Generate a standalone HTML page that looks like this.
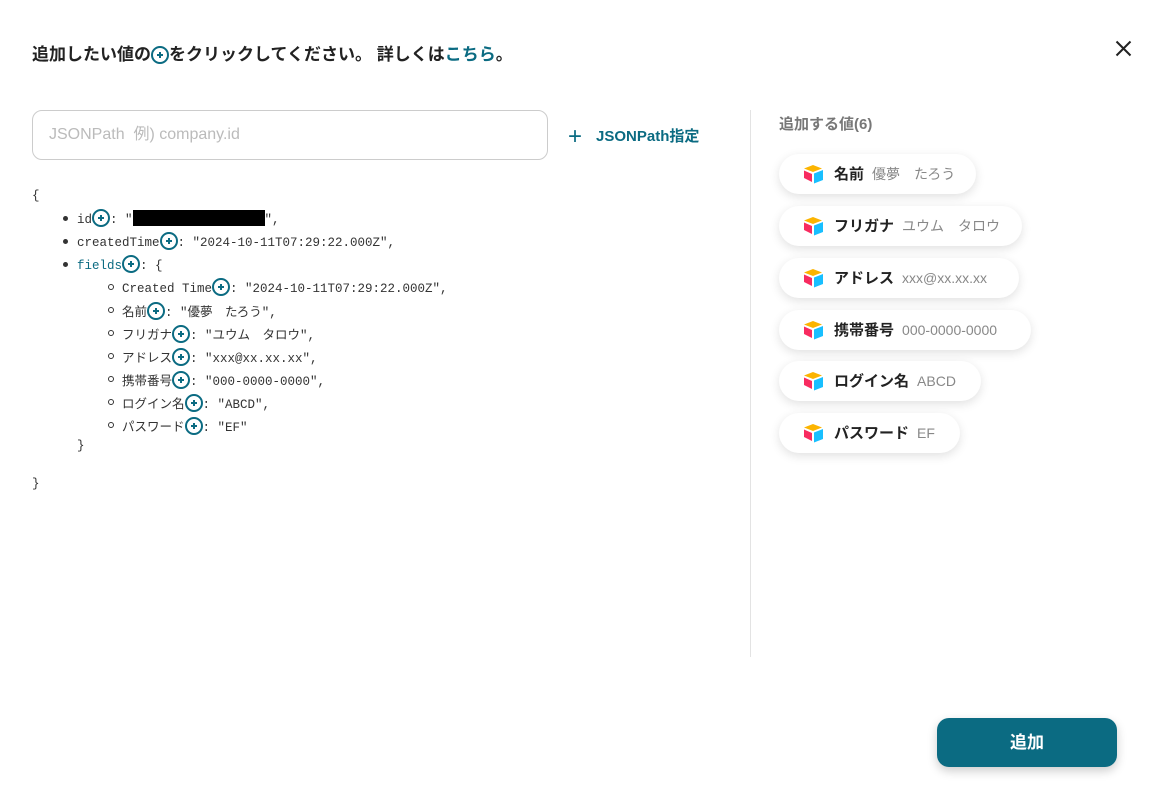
<!DOCTYPE html>
<html><head><meta charset="utf-8"><style>
body{margin:0;width:1157px;height:797px;background:#fff;font-family:"Liberation Sans","Noto Sans CJK JP",sans-serif;position:relative;overflow:hidden;color:#333}
.abs{position:absolute}
.title{left:32px;top:40px;font-size:17px;font-weight:bold;color:#222;white-space:nowrap}
.title a{color:#0b6b82;text-decoration:none}
.pl{display:inline-block;width:18px;height:18px;border:2px solid #0b6b82;border-radius:50%;box-sizing:border-box;vertical-align:-4px;position:relative}
.pl:before{content:"";position:absolute;left:4px;top:6px;width:6px;height:2px;background:#0b6b82}
.pl:after{content:"";position:absolute;left:6px;top:4px;width:2px;height:6px;background:#0b6b82}
.inp{left:32px;top:110px;width:516px;height:50px;border:1px solid #ccc;border-radius:10px;box-sizing:border-box;padding-left:16px;line-height:48px;color:#bbb;font-size:16px}
.jp{left:568px;top:123px;font-size:15px;font-weight:bold;color:#0b6b82}
.code{font-family:"Liberation Mono","Noto Sans CJK JP",monospace;font-size:12.5px;color:#333;white-space:pre}
.line{position:absolute;white-space:pre}
.b1:before{content:"";position:absolute;left:-14px;top:7px;width:5px;height:5px;border-radius:50%;background:#333}
.b2:before{content:"";position:absolute;left:-14px;top:6px;width:4px;height:4px;border-radius:50%;border:1px solid #333}
.div{left:750px;top:110px;width:1px;height:547px;background:#e3e3e3}
.hd{left:779px;top:113px;font-size:15px;font-weight:bold;color:#777}
.chip{position:absolute;left:779px;height:40px;border-radius:20px;background:#fff;box-shadow:0 3px 10px rgba(0,0,0,.12);font-size:15px;line-height:40px;white-space:nowrap}
.chip svg{position:absolute;left:24px;top:10px}
.chip b{position:absolute;left:55px;color:#222}
.chip span{color:#888;font-size:14px;font-weight:normal}
.btn{left:937px;top:718px;width:180px;height:49px;border-radius:12px;background:#0b6b82;color:#fff;font-weight:bold;font-size:17px;text-align:center;line-height:49px;box-shadow:0 4px 10px rgba(0,0,0,.2)}
</style></head><body>
<div class="abs title">追加したい値の<span class="pl"></span>をクリックしてください。 詳しくは<a>こちら</a>。</div>
<svg class="abs" style="left:1115px;top:40px" width="17" height="17"><path d="M1.5 1.5L15.5 15.5M15.5 1.5L1.5 15.5" stroke="#222" stroke-width="2"/></svg>
<div class="abs inp">JSONPath&nbsp; 例) company.id</div>
<div class="abs jp"><span style="font-size:24px;font-weight:normal;vertical-align:-3px;margin-right:14px">+</span>JSONPath指定</div>
<div class="abs code" style="left:0;top:0;width:740px;height:520px">
<div class="line" style="left:32px;top:189px">{</div>
<div class="line b1" style="left:77px;top:209px">id<span class="pl"></span>: "<span style="display:inline-block;width:132px;height:16px;background:#000;vertical-align:-3px"></span>",</div>
<div class="line b1" style="left:77px;top:232px">createdTime<span class="pl"></span>: "2024-10-11T07:29:22.000Z",</div>
<div class="line b1" style="left:77px;top:255px"><span style="color:#0b6b82">fields</span><span class="pl"></span>: {</div>
<div class="line b2" style="left:122px;top:278px">Created Time<span class="pl"></span>: "2024-10-11T07:29:22.000Z",</div>
<div class="line b2" style="left:122px;top:301px">名前<span class="pl"></span>: "優夢　たろう",</div>
<div class="line b2" style="left:122px;top:324px">フリガナ<span class="pl"></span>: "ユウム　タロウ",</div>
<div class="line b2" style="left:122px;top:347px">アドレス<span class="pl"></span>: "xxx@xx.xx.xx",</div>
<div class="line b2" style="left:122px;top:370px">携帯番号<span class="pl"></span>: "000-0000-0000",</div>
<div class="line b2" style="left:122px;top:393px">ログイン名<span class="pl"></span>: "ABCD",</div>
<div class="line b2" style="left:122px;top:416px">パスワード<span class="pl"></span>: "EF"</div>
<div class="line" style="left:77px;top:439px">}</div>
<div class="line" style="left:32px;top:477px">}</div>
</div>
<div class="abs div"></div>
<div class="abs hd">追加する値(6)</div>
<svg width="0" height="0" style="position:absolute"><defs><g id="at"><path d="M10 1L19 4.5 10 8 1 4.5Z" fill="#fcb400"/><path d="M11 9.5L20 6V16L11 19.5Z" fill="#18bfff"/><path d="M1 6.5L9 10V18L1 14Z" fill="#f82b60"/></g></defs></svg>
<div class="chip" style="top:154px;width:197px"><svg width="21" height="20"><use href="#at"/></svg><b>名前 <span>&nbsp;優夢　たろう</span></b></div>
<div class="chip" style="top:206px;width:243px"><svg width="21" height="20"><use href="#at"/></svg><b>フリガナ <span>&nbsp;ユウム　タロウ</span></b></div>
<div class="chip" style="top:258px;width:240px"><svg width="21" height="20"><use href="#at"/></svg><b>アドレス <span>&nbsp;xxx@xx.xx.xx</span></b></div>
<div class="chip" style="top:310px;width:252px"><svg width="21" height="20"><use href="#at"/></svg><b>携帯番号 <span>&nbsp;000-0000-0000</span></b></div>
<div class="chip" style="top:361px;width:202px"><svg width="21" height="20"><use href="#at"/></svg><b>ログイン名 <span>&nbsp;ABCD</span></b></div>
<div class="chip" style="top:413px;width:181px"><svg width="21" height="20"><use href="#at"/></svg><b>パスワード <span>&nbsp;EF</span></b></div>
<div class="abs btn">追加</div>
</body></html>
